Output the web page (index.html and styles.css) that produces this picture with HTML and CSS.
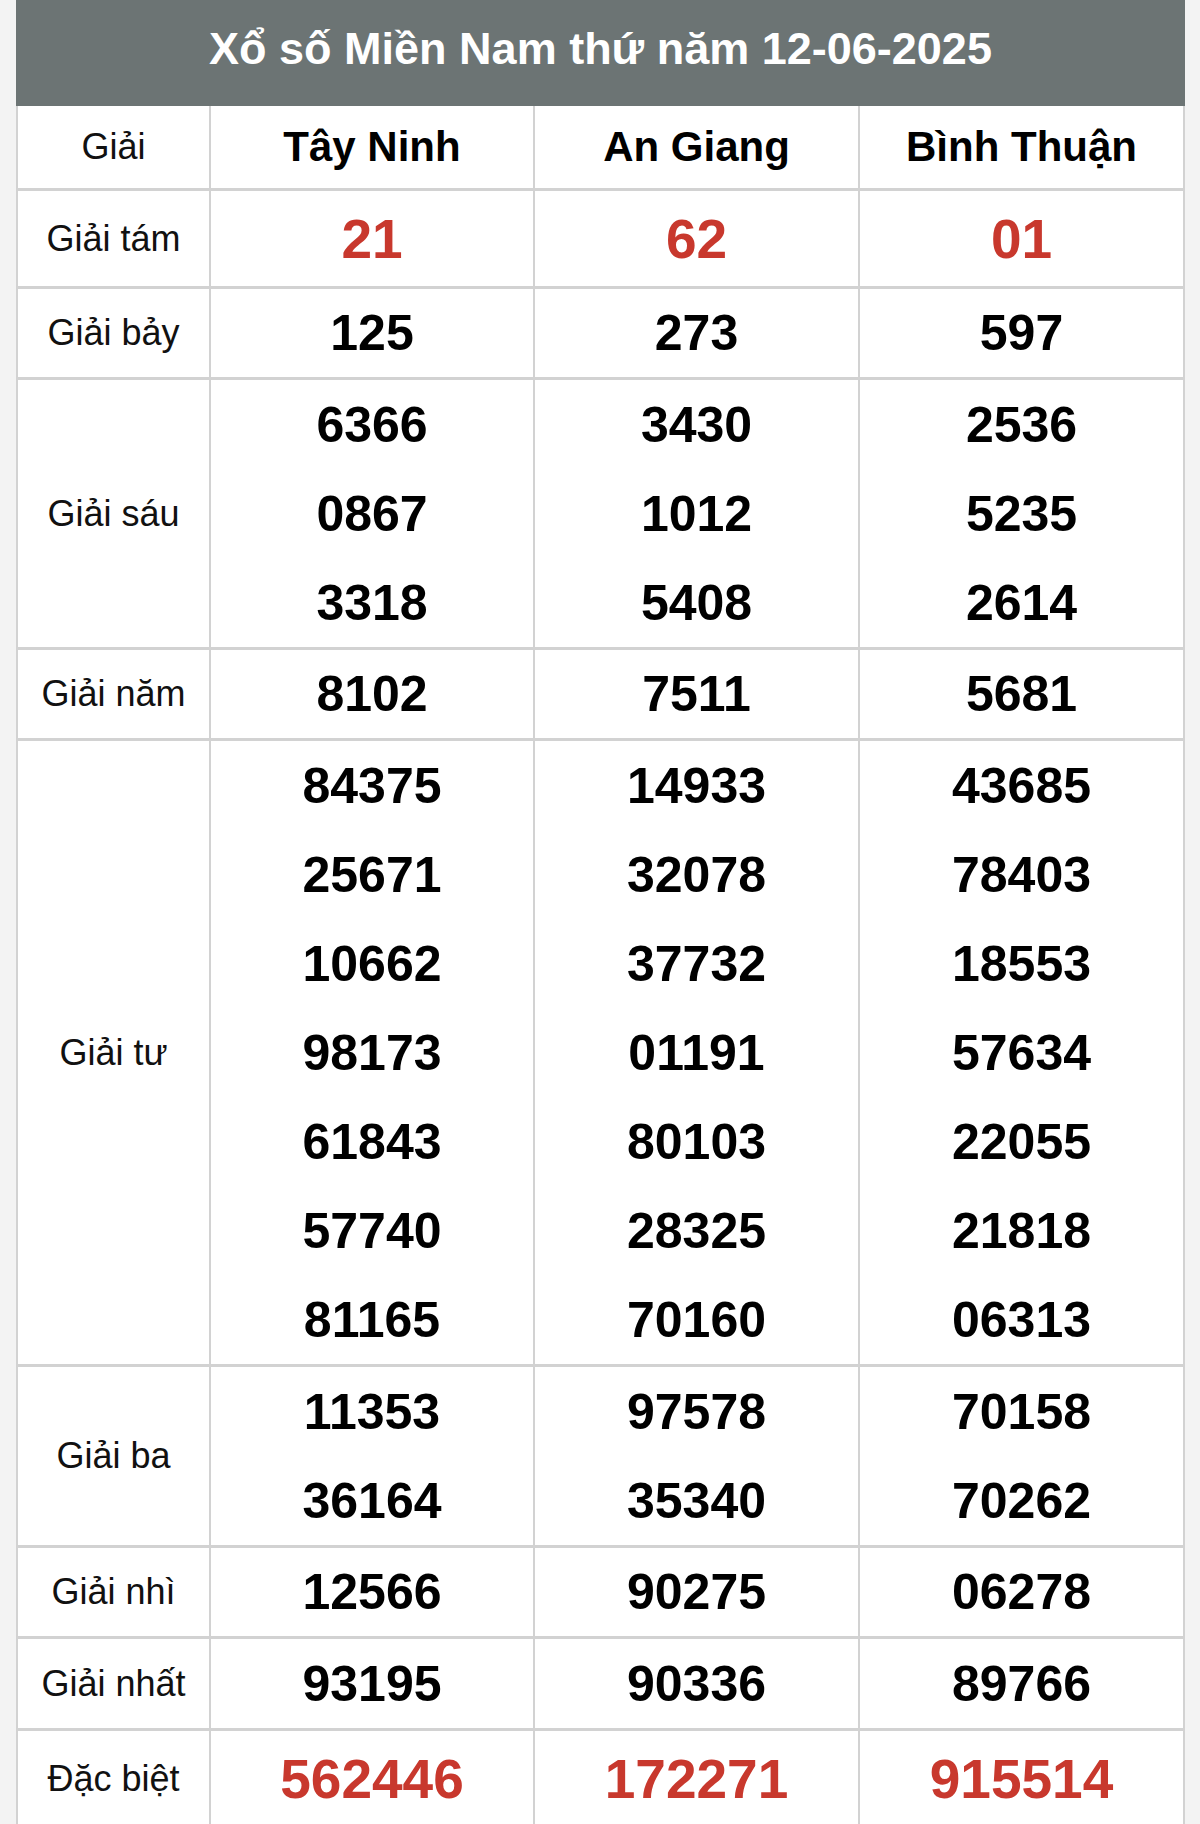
FILE: index.html
```html
<!DOCTYPE html>
<html lang="vi">
<head>
<meta charset="utf-8">
<title>Xổ số Miền Nam thứ năm 12-06-2025</title>
<link rel="stylesheet" href="styles.css">
</head>
<body>
<div class="wrap">
  <div class="title">Xổ số Miền Nam thứ năm 12-06-2025</div>
  <div class="grid">
    <div class="row head">
      <div class="cell label">Giải</div>
      <div class="cell prov">Tây Ninh</div>
      <div class="cell prov">An Giang</div>
      <div class="cell prov">Bình Thuận</div>
    </div>
    <div class="row r-tam">
      <div class="cell label">Giải tám</div>
      <div class="cell num red">21</div>
      <div class="cell num red">62</div>
      <div class="cell num red">01</div>
    </div>
    <div class="row r-one">
      <div class="cell label">Giải bảy</div>
      <div class="cell num">125</div>
      <div class="cell num">273</div>
      <div class="cell num">597</div>
    </div>
    <div class="row">
      <div class="cell label">Giải sáu</div>
      <div class="cell list"><div>6366</div><div>0867</div><div>3318</div></div>
      <div class="cell list"><div>3430</div><div>1012</div><div>5408</div></div>
      <div class="cell list"><div>2536</div><div>5235</div><div>2614</div></div>
    </div>
    <div class="row r-one">
      <div class="cell label">Giải năm</div>
      <div class="cell num">8102</div>
      <div class="cell num">7511</div>
      <div class="cell num">5681</div>
    </div>
    <div class="row">
      <div class="cell label">Giải tư</div>
      <div class="cell list"><div>84375</div><div>25671</div><div>10662</div><div>98173</div><div>61843</div><div>57740</div><div>81165</div></div>
      <div class="cell list"><div>14933</div><div>32078</div><div>37732</div><div>01191</div><div>80103</div><div>28325</div><div>70160</div></div>
      <div class="cell list"><div>43685</div><div>78403</div><div>18553</div><div>57634</div><div>22055</div><div>21818</div><div>06313</div></div>
    </div>
    <div class="row">
      <div class="cell label">Giải ba</div>
      <div class="cell list"><div>11353</div><div>36164</div></div>
      <div class="cell list"><div>97578</div><div>35340</div></div>
      <div class="cell list"><div>70158</div><div>70262</div></div>
    </div>
    <div class="row r-one">
      <div class="cell label">Giải nhì</div>
      <div class="cell num">12566</div>
      <div class="cell num">90275</div>
      <div class="cell num">06278</div>
    </div>
    <div class="row r-nhat">
      <div class="cell label">Giải nhất</div>
      <div class="cell num">93195</div>
      <div class="cell num">90336</div>
      <div class="cell num">89766</div>
    </div>
    <div class="row r-db">
      <div class="cell label">Đặc biệt</div>
      <div class="cell num red">562446</div>
      <div class="cell num red">172271</div>
      <div class="cell num red">915514</div>
    </div>
  </div>
</div>
</body>
</html>
```
FILE: styles.css
```css
html, body {
  margin: 0;
  padding: 0;
  background: #f3f3f3;
  font-family: "Liberation Sans", Arial, sans-serif;
}

.wrap {
  margin-left: 16px;
  width: 1169px;
  height: 1824px;
  overflow: hidden;
}

.title {
  height: 106px;
  background: #6c7474;
  color: #ffffff;
  font-weight: bold;
  font-size: 45px;
  display: flex;
  align-items: center;
  justify-content: center;
  padding-bottom: 8px;
  box-sizing: border-box;
}

.grid {
  display: flex;
  flex-direction: column;
  gap: 3px;
  background: #d2d2d2;
  padding: 0 2px;
}

.row {
  display: grid;
  grid-template-columns: 191px 322px 323px 323px;
  gap: 2px;
}

.cell {
  background: #ffffff;
  display: flex;
  align-items: center;
  justify-content: center;
  color: #000000;
}

.head .cell { height: 82px; }
.r-tam .cell { height: 95px; }
.r-one .cell { height: 88px; }
.r-nhat .cell { height: 89px; }
.r-db .cell { height: 95px; }

.label {
  font-size: 36px;
  color: #111111;
}

.prov {
  font-size: 42px;
  font-weight: bold;
}

.num {
  font-size: 50px;
  font-weight: bold;
}

.num.red {
  color: #c8382d;
  font-size: 55px;
}

.list {
  flex-direction: column;
  font-size: 50px;
  font-weight: bold;
}

.list div {
  height: 89px;
  display: flex;
  align-items: center;
}
```
